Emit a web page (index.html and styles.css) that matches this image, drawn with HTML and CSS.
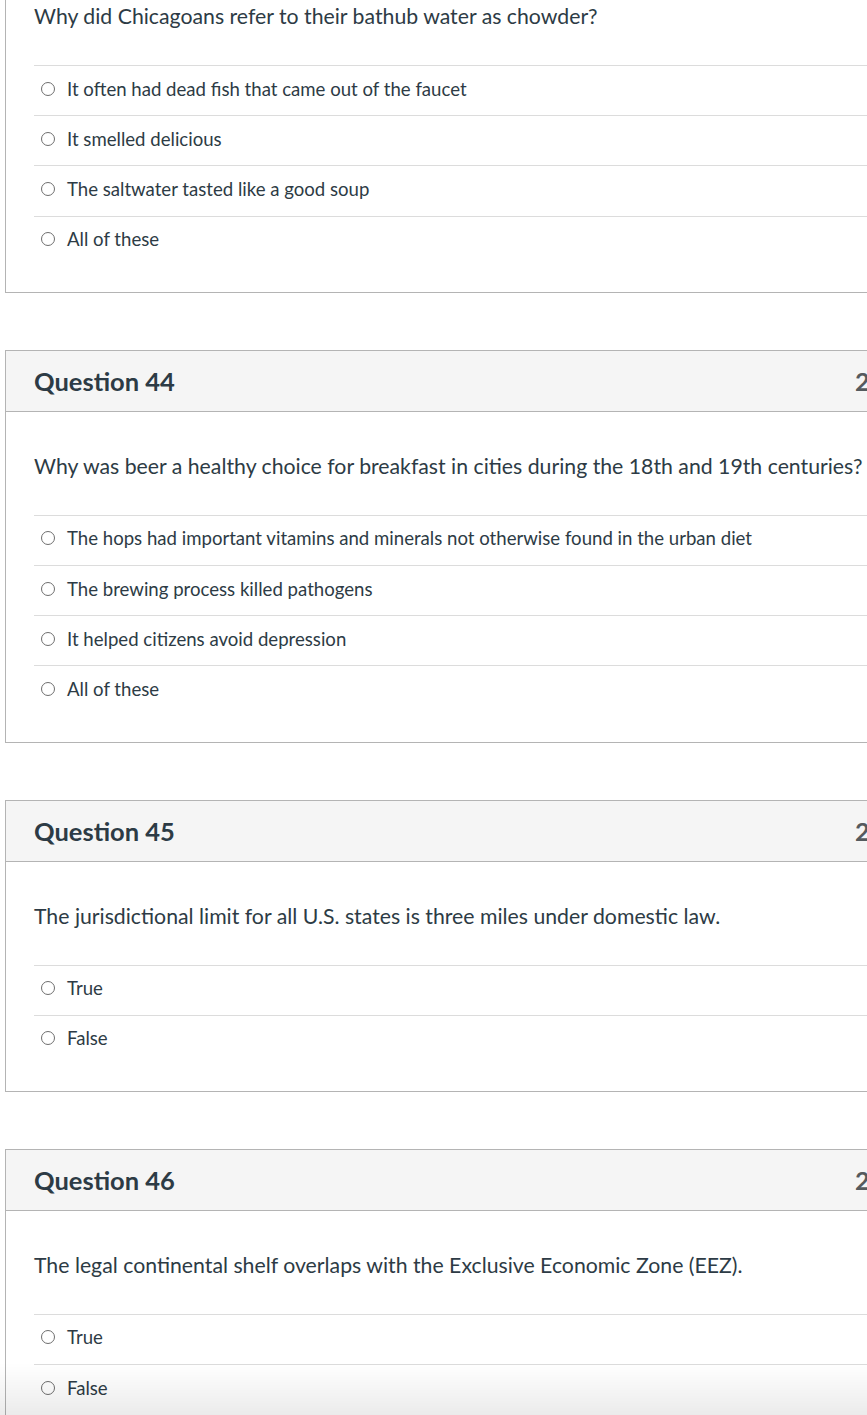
FILE: index.html
```html
<!DOCTYPE html>
<html lang="en">
<head>
<meta charset="utf-8">
<title>Quiz</title>
<link rel="stylesheet" href="styles.css">
</head>
<body>
<div class="page">
  <section class="question first">
    <div class="q-header"><span class="q-title">Question 43</span><span class="q-points">2 pts</span></div>
    <div class="q-text">Why did Chicagoans refer to their bathub water as chowder?</div>
    <ul class="answers">
      <li class="answer"><span class="radio"></span><span>It often had dead fish that came out of the faucet</span></li>
      <li class="answer"><span class="radio"></span><span>It smelled delicious</span></li>
      <li class="answer"><span class="radio"></span><span>The saltwater tasted like a good soup</span></li>
      <li class="answer"><span class="radio"></span><span>All of these</span></li>
    </ul>
  </section>

  <section class="question">
    <div class="q-header"><span class="q-title">Question 44</span><span class="q-points">2 pts</span></div>
    <div class="q-text">Why was beer a healthy choice for breakfast in cities during the 18th and 19th centuries?</div>
    <ul class="answers">
      <li class="answer"><span class="radio"></span><span>The hops had important vitamins and minerals not otherwise found in the urban diet</span></li>
      <li class="answer"><span class="radio"></span><span>The brewing process killed pathogens</span></li>
      <li class="answer"><span class="radio"></span><span>It helped citizens avoid depression</span></li>
      <li class="answer"><span class="radio"></span><span>All of these</span></li>
    </ul>
  </section>

  <section class="question">
    <div class="q-header"><span class="q-title">Question 45</span><span class="q-points">2 pts</span></div>
    <div class="q-text">The jurisdictional limit for all U.S. states is three miles under domestic law.</div>
    <ul class="answers">
      <li class="answer"><span class="radio"></span><span>True</span></li>
      <li class="answer"><span class="radio"></span><span>False</span></li>
    </ul>
  </section>

  <section class="question">
    <div class="q-header"><span class="q-title">Question 46</span><span class="q-points">2 pts</span></div>
    <div class="q-text">The legal continental shelf overlaps with the Exclusive Economic Zone (EEZ).</div>
    <ul class="answers">
      <li class="answer"><span class="radio"></span><span>True</span></li>
      <li class="answer"><span class="radio"></span><span>False</span></li>
    </ul>
  </section>
</div>
<div class="bottom-fade"></div>
</body>
</html>
```
FILE: styles.css
```css
html, body {
  margin: 0;
  padding: 0;
  overflow: hidden;
  background: #ffffff;
}
body {
  font-family: Lato, "Noto Sans", "Liberation Sans", sans-serif;
  color: #2d3b45;
  width: 867px;
  height: 1415px;
}
.page {
  padding-left: 5px;
  display: flex;
  flex-direction: column;
  gap: 57px;
}
.question {
  width: 935px;
  border: 1px solid #b4b4b4;
  box-sizing: border-box;
  padding-bottom: 26px;
}
.question.first {
  margin-top: -100px;
}
.q-header {
  height: 60px;
  background: #f5f5f5;
  border-bottom: 1px solid #b4b4b4;
  display: flex;
  align-items: center;
  justify-content: space-between;
  padding: 0 28px;
}
.q-title {
  font-size: 25.5px;
  font-weight: 700;
  color: #2d3b45;
}
.q-points {
  font-size: 25.5px;
  font-weight: 700;
  color: #555a5e;
}
.q-text {
  font-size: 21.25px;
  line-height: 26px;
  padding: 41px 28px 0 28px;
  margin-bottom: 36px;
  white-space: nowrap;
}
.answers {
  list-style: none;
  margin: 0 0 0 28px;
  padding: 0;
}
.answer {
  border-top: 1px solid #dcdcdc;
  display: flex;
  align-items: center;
  gap: 12px;
  padding-left: 7px;
  padding-bottom: 4px;
  box-sizing: border-box;
  height: 50.2px;
  font-size: 18.6px;
}
.radio {
  width: 14px;
  height: 14px;
  border: 1px solid #6e6e6e;
  border-radius: 50%;
  box-sizing: border-box;
  flex: none;
}
.bottom-fade {
  position: fixed;
  left: 0;
  right: 0;
  bottom: 0;
  height: 52px;
  background: linear-gradient(to bottom, rgba(0,0,0,0), rgba(0,0,0,0.08));
  pointer-events: none;
}
```
